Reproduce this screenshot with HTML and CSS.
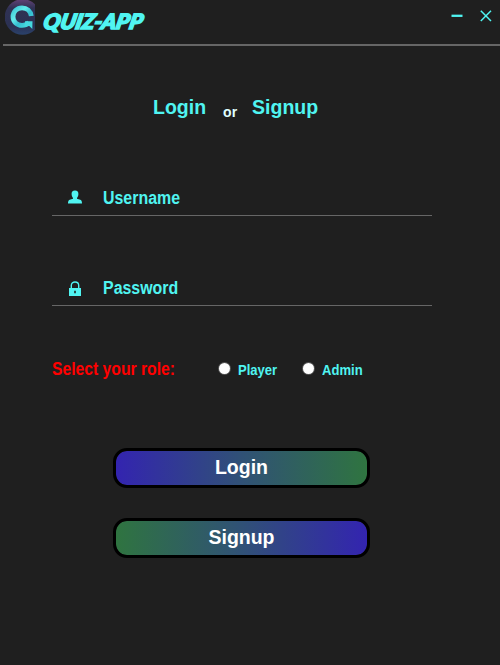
FILE: index.html
```html
<!DOCTYPE html>
<html lang="en">
<head>
<meta charset="utf-8">
<title>Quiz-App</title>
<link rel="stylesheet" href="styles.css">
</head>
<body>
<header class="titlebar">
  <svg class="logo" width="30" height="35" viewBox="0 0 30 35">
    <defs>
      <linearGradient id="disc" x1="0" y1="0" x2="0" y2="1"><stop offset="0" stop-color="#634276"/><stop offset=".25" stop-color="#303254"/><stop offset=".75" stop-color="#2b3153"/><stop offset="1" stop-color="#2a426c"/></linearGradient>
      <linearGradient id="ring" x1="0" y1="0" x2="1" y2="1"><stop offset="0" stop-color="#3fc6d4"/><stop offset=".35" stop-color="#62ecec"/><stop offset=".6" stop-color="#35bdd0"/><stop offset="1" stop-color="#49e0e0"/></linearGradient>
    </defs>
    <circle cx="17.5" cy="17" r="17.8" fill="url(#disc)"/>
    <path d="M26.3 16C25.6 11 21.8 7.8 17 7.8C11.8 7.8 8 11.8 8 16.8C8 21.8 12 25.4 17 25.4C20 25.4 22 24.4 24 22.5" fill="none" stroke="url(#ring)" stroke-width="4.8"/>
    <path d="M20 21.3L27.5 21.2L27.3 29L24.3 26L19.5 26.5Z" fill="#45d8de"/>
  </svg>
  <h1 class="brand">QUIZ-APP</h1>
  <svg class="controls" width="44" height="16" viewBox="0 0 44 16">
    <path d="M1.5 7.8H12.5" stroke-width="2.3"/>
    <path d="M30.8 2.8L41 13M41 2.8L30.8 13" stroke-width="1.5"/>
  </svg>
</header>
<main>
  <nav class="tabs"><span>Login</span><span class="or">or</span><span>Signup</span></nav>
  <div class="field">
    <svg width="16" height="16" viewBox="0 0 16 16"><path d="M8 .5C10.5 .5 11.6 2 11.4 4.3C11.3 6.2 10.6 7.2 10 8V8.8L13.3 9.8C14.7 10.4 15 11.6 15 13.6H1C1 11.6 1.3 10.4 2.7 9.8L6 8.8V8C5.4 7.2 4.7 6.2 4.6 4.3C4.4 2 5.5 .5 8 .5Z"/></svg>
    <label class="narrow">Username</label>
  </div>
  <div class="field">
    <svg width="16" height="16" viewBox="0 0 16 16"><path d="M4.3 8V5.5C4.3 .8 11.7 .8 11.7 5.5V8" fill="none" stroke="#50f4f1" stroke-width="1.4"/><path fill-rule="evenodd" d="M2 8H14V16H2ZM7.2 10.8V13.3H8.8V10.8Z"/></svg>
    <label class="narrow">Password</label>
  </div>
  <div class="roles">
    <span class="prompt narrow">Select your role:</span>
    <label class="role"><i class="dot"></i><span class="narrow">Player</span></label>
    <label class="role"><i class="dot"></i><span class="narrow">Admin</span></label>
  </div>
  <div class="actions">
    <button class="login">Login</button>
    <button class="signup">Signup</button>
  </div>
</main>
</body>
</html>
```

FILE: styles.css
```css
* { box-sizing: border-box; }
body {
  margin: 0;
  height: 665px;
  overflow: hidden;
  background: #1f1f1f;
  color: #50f4f1;
  font: bold 19.5px/24px "Liberation Sans", Arial, sans-serif;
}
.titlebar {
  display: flex;
  align-items: flex-start;
  height: 46px;
  margin-left: 3px;
  padding-left: 2px;
  border-bottom: 2px solid #666;
}
.brand {
  width: 110px;
  margin: 9px 0 0 9px;
  font: italic 900 21px/24px Lato, sans-serif;
  -webkit-text-stroke: 1.6px #50f4f1;
  transform: skewX(-12deg) scaleX(1.06);
  transform-origin: left center;
  white-space: nowrap;
}
.controls { margin: 8px 6px 0 auto; fill: none; stroke: #50f4f1; }
main { padding: 49px 0 0 52px; }
.tabs { display: flex; height: 85px; margin-left: 101px; }
.tabs .or {
  width: 46px;
  padding: 5px 0 0 17px;
  color: #e0ffff;
  font-size: 14px;
}
.narrow {
  font-size: 18px;
  white-space: nowrap;
  transform: scaleX(.885);
  transform-origin: left center;
}
.field {
  display: flex;
  align-items: center;
  width: 380px;
  height: 36px;
  margin-bottom: 54px;
  padding-left: 15px;
  border-bottom: 1px solid #666;
}
.field svg { margin-right: 20px; fill: #50f4f1; }
.roles { display: flex; align-items: center; height: 24px; margin-top: -3px; }
.roles .prompt { width: 167px; color: #f00; transform: scaleX(.872); }
.role { display: flex; align-items: center; width: 84px; }
.dot { width: 11px; height: 11px; margin: 0 8px 2px 0; border-radius: 50%; background: #fff; box-shadow: 0 0 0 1px #555; }
.role .narrow { padding-top: 2px; font-size: 15px; transform: scaleX(.87); }
.actions { display: flex; flex-direction: column; gap: 30px; width: 257px; margin: 67px 0 0 61px; }
button {
  height: 40px;
  padding: 0 0 2px;
  border: 3px solid #000;
  border-radius: 14px;
  background: linear-gradient(90deg, #3324b0, #305176 50%, #2f7440) padding-box;
  color: #fff;
  font: inherit;
}
.signup { background: linear-gradient(270deg, #3324b0, #305176 50%, #2f7440) padding-box; }
```
